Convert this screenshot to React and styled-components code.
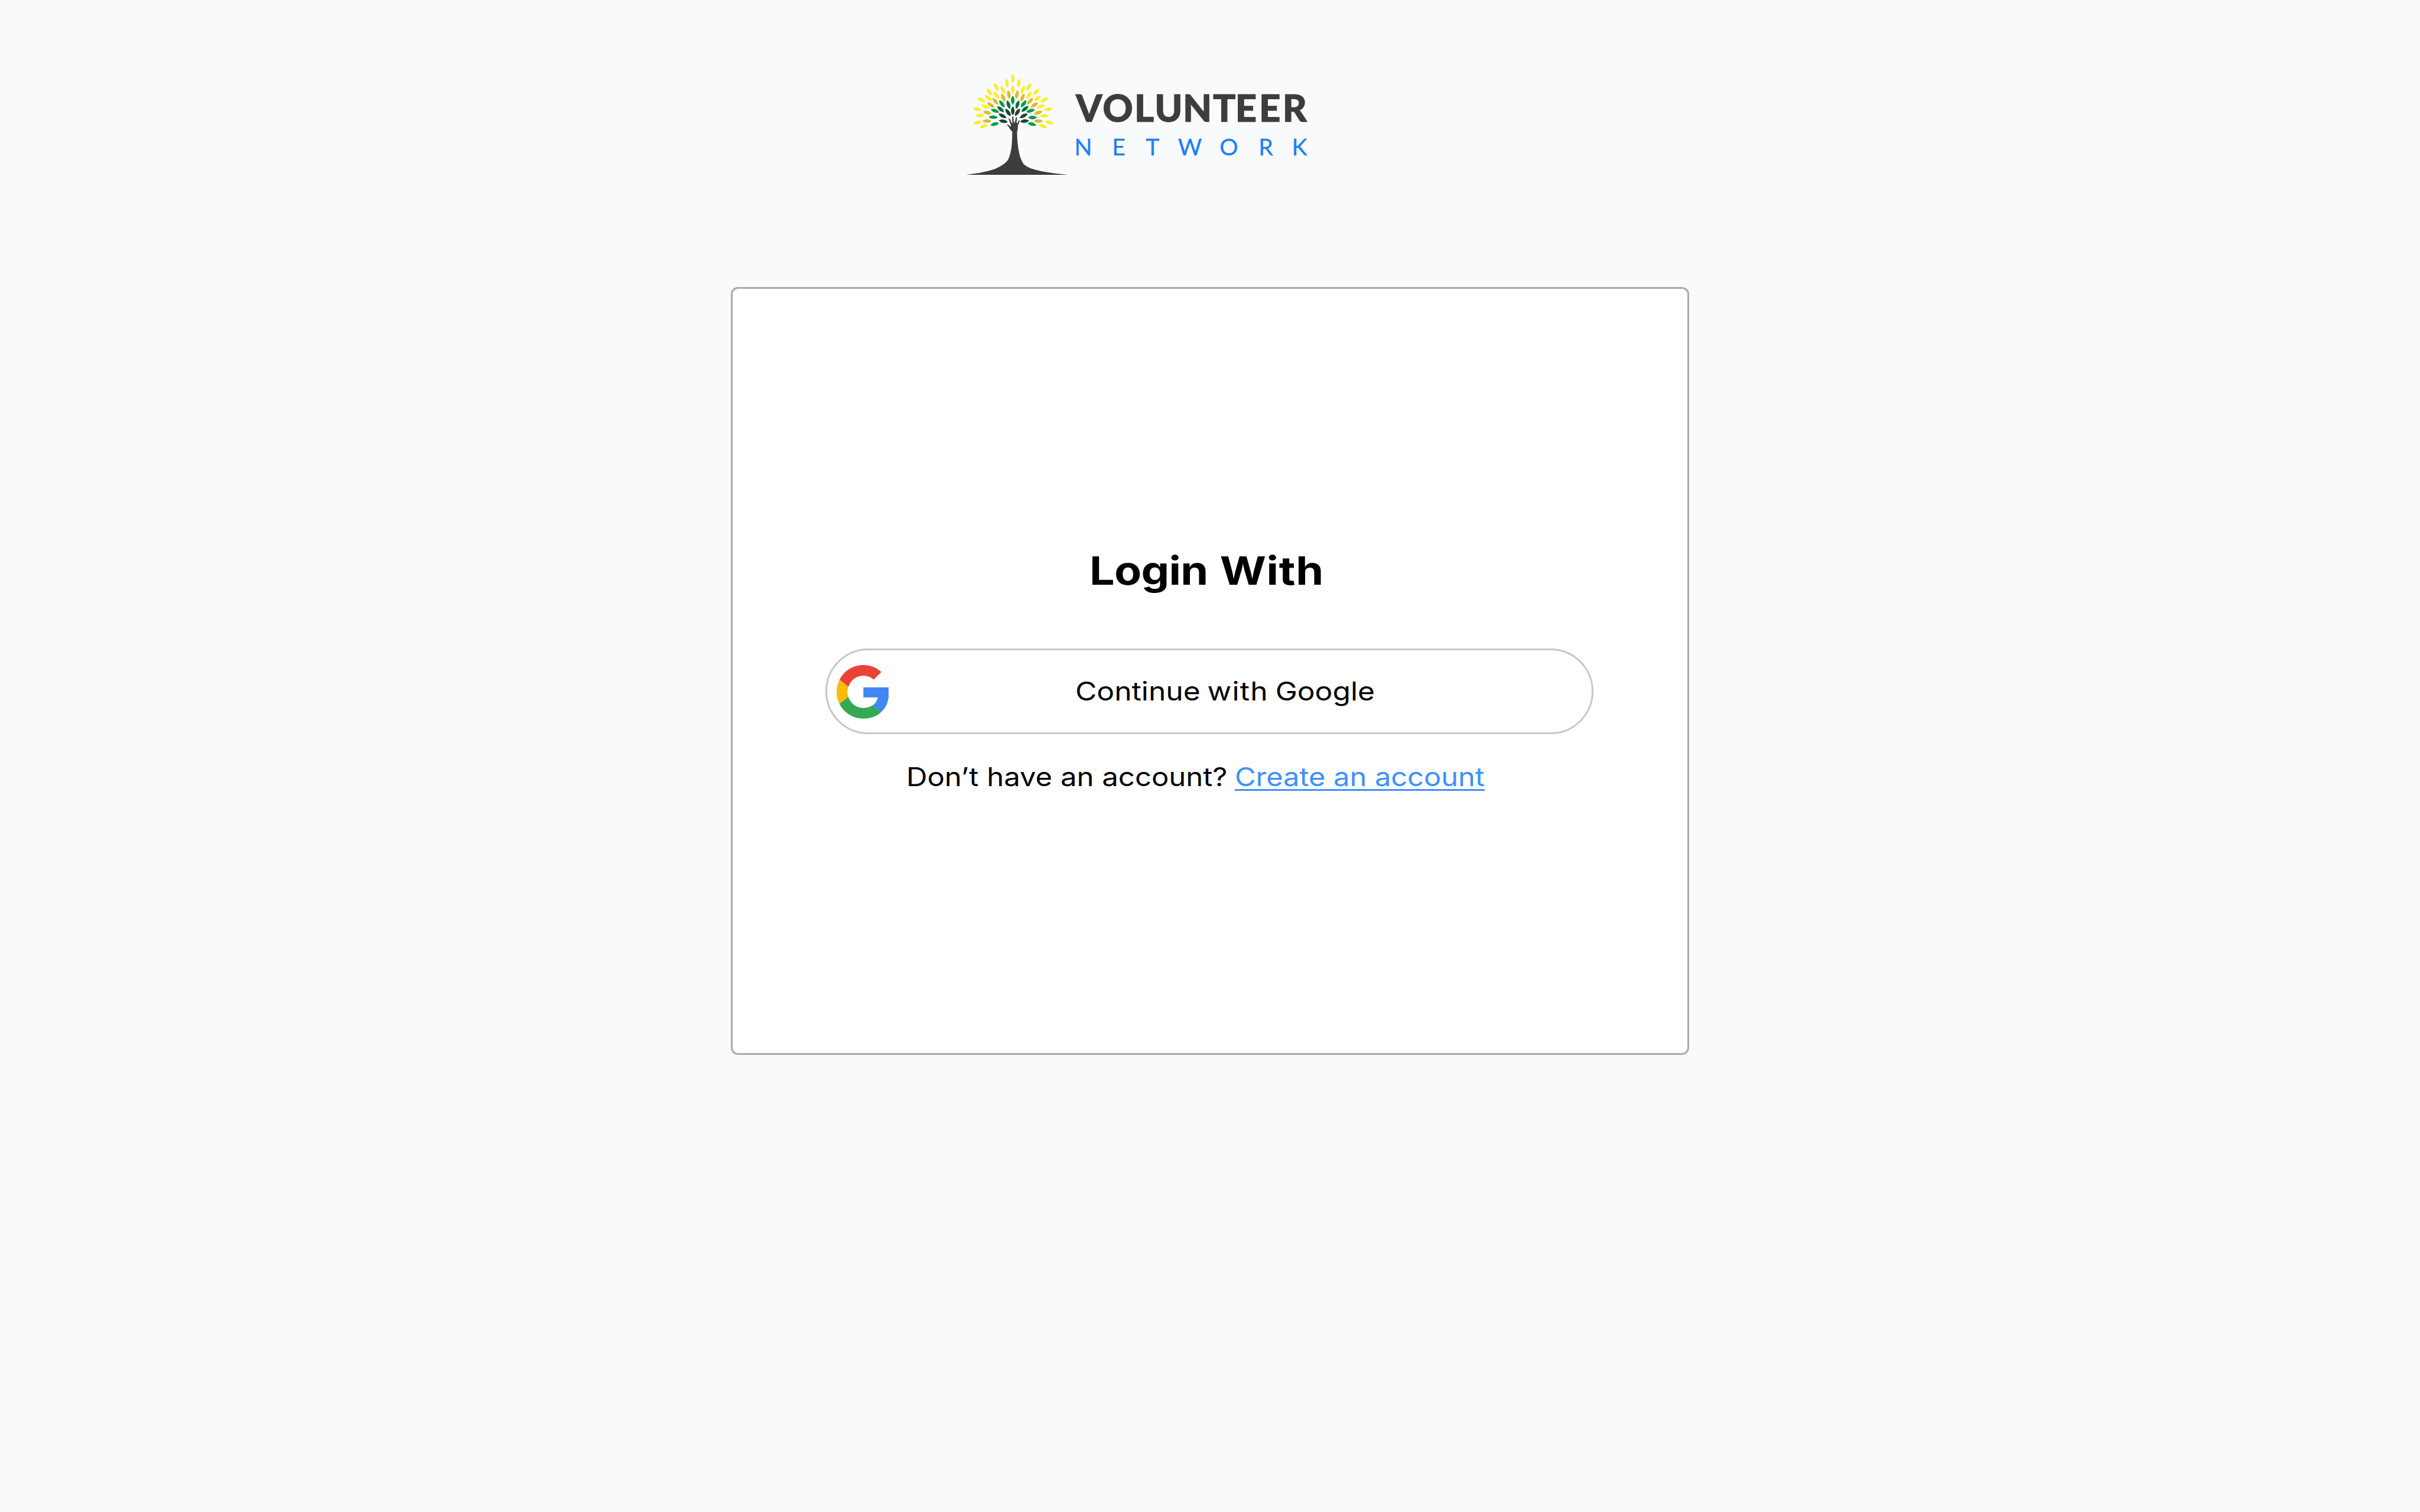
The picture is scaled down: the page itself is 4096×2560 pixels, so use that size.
import React from "react";
import styled, { createGlobalStyle } from "styled-components";

const GlobalStyle = createGlobalStyle`
  *, *::before, *::after { box-sizing: border-box; }
  html, body { margin: 0; background: #f9fafc; }
  body { font-family: Inter, "Open Sans", sans-serif; color: #000; }
`;

const Page = styled.div`
  width: 100%;
  height: 100vh;
  overflow: hidden;
  display: flex;
  flex-direction: column;
  background: #f9fafc;
`;

const Header = styled.header`
  flex: none;
  height: 486.4px;
  padding: 113.8px 0 0 1630.8px;
`;

const LogoSvg = styled.svg`
  display: block;
  width: 587.9px;
  height: 189.6px;
`;

const LogoName = styled.text`
  font: 900 201px Lato, sans-serif;
  fill: #3d3d3d;
  stroke: #3d3d3d;
  stroke-width: 3;
`;

const LogoTag = styled.text`
  font: 400 124px Lato, sans-serif;
  fill: #1e80f5;
  stroke: #1e80f5;
  stroke-width: 1;
`;

const Card = styled.main`
  flex: none;
  align-self: center;
  width: 1621.3px;
  height: 1300px;
  padding: 436.6px 159px 0 156.3px;
  background: #fff;
  border: 3px solid #ababab;
  border-radius: 12px;
  display: flex;
  flex-direction: column;
`;

const Phrase = styled.span`
  display: block;
  flex: none;
  white-space: nowrap;
  transform: scaleX(${(p) => p.$stretch});
  transform-origin: left center;
`;

const Tracked = styled.span`
  letter-spacing: ${(p) => p.$space}px;
`;

const Title = styled.h1`
  margin: 0 0 92px;
  padding-left: 447.5px;
  font-size: 66.1px;
  line-height: 80px;
  font-weight: 700;
  word-spacing: 2px;
`;

const GoogleButton = styled.button`
  height: 145px;
  padding: 0 0 0 16px;
  display: flex;
  align-items: center;
  gap: 315.6px;
  background: #fff;
  border: 3px solid #c7c7c7;
  border-radius: 73px;
  font: 400 43.8px/53px Inter, sans-serif;
  word-spacing: -2px;
  color: #000;
  cursor: pointer;
`;

const GoogleMark = styled.svg`
  flex: none;
  display: block;
  width: 88.8px;
  height: 90.7px;
  margin-top: 2px;
`;

const SignUp = styled.div`
  display: flex;
  gap: 70.6px;
  margin-top: 46.3px;
  padding-left: 137.5px;
  font-size: 43.8px;
  line-height: 53px;
`;

const Link = styled.a`
  color: #3f90fc;
  text-decoration: underline;
  text-decoration-thickness: 2.5px;
  text-underline-offset: 4.5px;
  text-decoration-skip-ink: none;
`;

const LEAF = "M0 -24 C12.3 -11 12.3 11 0 24 C-12.3 11 -12.3 -11 0 -24Z";

const LEAVES = {
  "#faed2f": [
    [263, 60, 0], [263, 120, 0],
    [295, 85, 6], [348, 106, 30], [389, 132, 42], [431, 175, 62],
    [453, 225, 80], [432, 260, 93], [460, 296, 106], [424, 315, 113],
    [316, 121, 24], [350, 148, 36], [395, 166, 50], [412, 210, 70],
    [232, 85, -6], [175, 106, -28], [138, 132, -40], [95, 175, -62],
    [73, 224, -79], [88, 258, -90], [73, 296, -106], [108, 315, -113],
    [210, 121, -26], [176, 150, -38], [133, 165, -50], [115, 210, -70],
  ],
  "#d6bd2b": [
    [285, 146, 10], [315, 162, 24], [355, 182, 42], [379, 202, 58],
    [399, 243, 72], [400, 288, 90],
    [242, 146, -10], [212, 162, -24], [170, 182, -40], [145, 202, -55],
    [127, 243, -76], [125, 288, -90],
  ],
  "#049a45": [
    [263, 176, 0], [321, 195, 38], [358, 233, 74], [369, 269, 90], [366, 304, 104],
    [205, 196, -36], [168, 233, -70], [158, 267, -88], [166, 304, -104],
  ],
  "#046b38": [
    [288, 200, 18], [328, 223, 52], [240, 200, -18], [198, 224, -50],
  ],
  "#1c4429": [
    [263, 233, 0], [288, 241, 34], [321, 260, 62], [326, 288, 84],
    [238, 242, -36], [208, 260, -62], [212, 289, -80],
  ],
};

const TRUNK =
  "M18 575 C80 567 130 557 168 544 C190 535 215 521 232 503 C246 485 252 455 256 430 " +
  "C260 400 260 370 260 344 C250 336 245 327 242 320 L232 309 C233 305 238 305 240 308 " +
  "L250 317 C253 318 254 314 253 311 L241 278 C241 273 245 272 247 276 L258 299 C259 300 261 300 261 298 " +
  "L259 266 C260 263 265 263 266 266 L269 296 L273 297 L280 269 C281 266 286 266 286 270 L283 298 L286 300 " +
  "L296 284 C298 281 302 283 300 287 L291 310 C290 320 290 332 288 341 L286 344 C286 370 288 400 292 430 " +
  "C297 465 305 495 321 518 C335 532 355 540 372 545 C420 560 490 570 552 575 L552 576 L18 576Z";

function Logo() {
  return (
    <LogoSvg viewBox="0 0 1860 600" role="img" aria-label="Volunteer Network">
      {Object.entries(LEAVES).map(([color, leaves]) => (
        <g key={color} fill={color}>
          {leaves.map(([x, y, angle]) => (
            <path key={`${x}-${y}`} d={LEAF} transform={`translate(${x} ${y}) rotate(${angle})`} />
          ))}
        </g>
      ))}
      <path d={TRUNK} fill="#3d3d3d" />
      <LogoName x="601 744 914 1023 1174 1335 1455 1582 1708" y="291">VOLUNTEER</LogoName>
      <LogoTag x="593 795 975 1148 1371 1580 1758" y="471">NETWORK</LogoTag>
    </LogoSvg>
  );
}

function GoogleIcon() {
  return (
    <GoogleMark viewBox="0 0 47 48" aria-hidden="true">
      <path fill="#EA4335" d="M24 9.5c3.54 0 6.71 1.22 9.21 3.6l6.85-6.85C35.9 2.38 30.47 0 24 0 14.62 0 6.51 5.38 2.56 13.22l7.98 6.19C12.43 13.72 17.74 9.5 24 9.5z" />
      <path fill="#4285F4" d="M46.98 24.55c0-1.57-.15-3.09-.38-4.55H24v9.02h12.94c-.58 2.96-2.26 5.48-4.78 7.18l7.73 6c4.51-4.18 7.09-10.36 7.09-17.65z" />
      <path fill="#FBBC05" d="M10.53 28.59c-.48-1.45-.76-2.99-.76-4.59s.27-3.14.76-4.59l-7.98-6.19C.92 16.46 0 20.12 0 24c0 3.88.92 7.54 2.56 10.78l7.97-6.19z" />
      <path fill="#34A853" d="M24 48c6.48 0 11.93-2.13 15.89-5.81l-7.73-6c-2.15 1.45-4.92 2.3-8.16 2.3-6.26 0-11.57-4.22-13.47-9.91l-7.98 6.19C6.51 42.62 14.62 48 24 48z" />
    </GoogleMark>
  );
}

export default function App() {
  return (
    <>
      <GlobalStyle />
      <Page>
        <Header>
          <Logo />
        </Header>
        <Card>
          <Title>
            <Phrase $stretch={1.141}>
              <Tracked $space={-0.6}>Login</Tracked> <Tracked $space={0.6}>With</Tracked>
            </Phrase>
          </Title>
          <GoogleButton type="button">
            <GoogleIcon />
            <Phrase $stretch={1.136}>
              Continue <Tracked $space={1.1}>with</Tracked> Google
            </Phrase>
          </GoogleButton>
          <SignUp>
            <Phrase $stretch={1.12}>Don’t have an account?</Phrase>
            <Phrase $stretch={1.113}>
              <Link href="#">Create an account</Link>
            </Phrase>
          </SignUp>
        </Card>
      </Page>
    </>
  );
}
